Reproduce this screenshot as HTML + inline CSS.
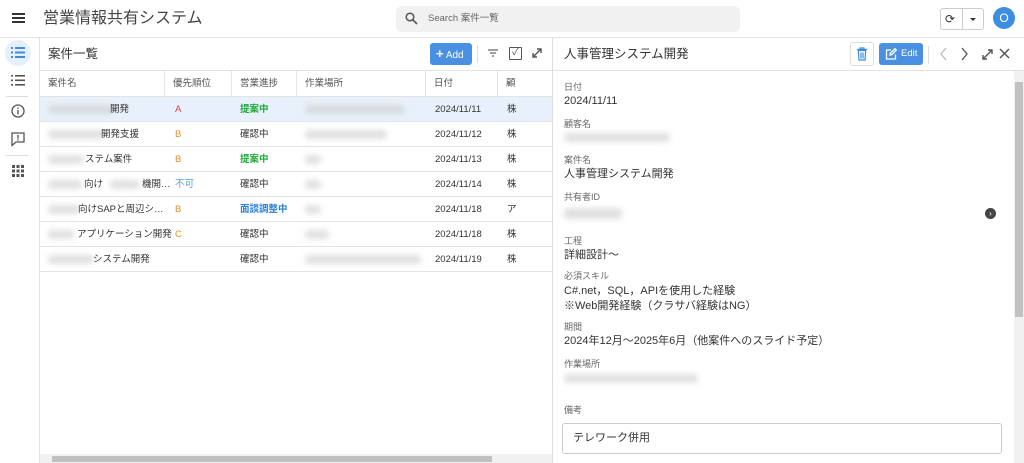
<!DOCTYPE html><html><head><meta charset="utf-8"><style>
*{box-sizing:border-box;margin:0;padding:0}
body{width:1024px;height:463px;overflow:hidden;font-family:"Liberation Sans","Noto Sans CJK JP",sans-serif;color:#333;background:#fff;position:relative;font-size:10px}
.abs{position:absolute;line-height:1.15}
.blur{position:absolute;background:#ccc;filter:blur(3px);border-radius:4px;opacity:.6}
.th{position:absolute;top:71px;height:26px;line-height:26px;font-size:9.5px;color:#555;border-right:1px solid #e4e4e4;padding-left:8px}
.row{position:absolute;left:40px;width:512px;height:25px;border-bottom:1px solid #e4e4e4;font-size:9.5px;line-height:25px}
.row span{position:absolute;white-space:nowrap}
.lbl{position:absolute;left:564px;font-size:9px;color:#666;line-height:1.15}
.val{position:absolute;left:564px;font-size:11px;color:#333;line-height:1.15}
</style></head><body>
<div class="abs" style="left:0;top:37px;width:1024px;height:1px;background:#e2e2e2"></div>
<div class="abs" style="left:12px;top:13px;width:13px;height:2px;background:#333;box-shadow:0 4px 0 #333,0 8px 0 #333"></div>
<div class="abs" style="left:43px;top:9px;font-size:16px;color:#444;line-height:20px">営業情報共有システム</div>
<div class="abs" style="left:396px;top:6px;width:344px;height:26px;background:#f1f1f1;border-radius:6px"></div>
<svg class="abs" style="left:405px;top:12px" width="13" height="13" viewBox="0 0 13 13"><circle cx="5" cy="5" r="3.8" fill="none" stroke="#555" stroke-width="1.5"/><path d="M8 8l4 4" stroke="#555" stroke-width="1.6"/></svg>
<div class="abs" style="left:428px;top:6px;font-size:9.5px;color:#666;line-height:26px">Search 案件一覧</div>
<div class="abs" style="left:940px;top:8px;width:44px;height:22px;border:1px solid #ccc;border-radius:3px"></div>
<div class="abs" style="left:962px;top:8px;width:1px;height:22px;background:#ccc"></div>
<div class="abs" style="left:945px;top:8px;font-size:12px;color:#333;line-height:22px">⟳</div>
<div class="abs" style="left:970px;top:18px;border:3px solid transparent;border-top:3px solid #333"></div>
<div class="abs" style="left:993px;top:7px;width:22px;height:22px;border-radius:50%;background:#3d8ee0;color:#fff;text-align:center;line-height:22px;font-size:12px">O</div>
<div class="abs" style="left:39px;top:38px;width:1px;height:425px;background:#e2e2e2"></div>
<div class="abs" style="left:5px;top:40px;width:26px;height:26px;border-radius:50%;background:#e6f0fb"></div>
<svg class="abs" style="left:11px;top:46px" width="14" height="13"><g fill="#3d8ee0"><rect x="0" y="1" width="2" height="2"/><rect x="0" y="5.5" width="2" height="2"/><rect x="0" y="10" width="2" height="2"/><rect x="4" y="1" width="10" height="2"/><rect x="4" y="5.5" width="10" height="2"/><rect x="4" y="10" width="10" height="2"/></g></svg>
<svg class="abs" style="left:11px;top:74px" width="14" height="13"><g fill="#555"><rect x="0" y="1" width="2" height="1.6"/><rect x="0" y="5.5" width="2" height="1.6"/><rect x="0" y="10" width="2" height="1.6"/><rect x="4" y="1" width="10" height="1.6"/><rect x="4" y="5.5" width="10" height="1.6"/><rect x="4" y="10" width="10" height="1.6"/></g></svg>
<div class="abs" style="left:6px;top:96px;width:22px;height:1px;background:#ddd"></div>
<svg class="abs" style="left:11px;top:104px" width="14" height="14"><circle cx="7" cy="7" r="6" fill="none" stroke="#555" stroke-width="1.3"/><rect x="6.3" y="6" width="1.4" height="4.5" fill="#555"/><rect x="6.3" y="3.5" width="1.4" height="1.4" fill="#555"/></svg>
<svg class="abs" style="left:11px;top:132px" width="14" height="15"><path d="M1 1h12v9H5l-4 3.5z" fill="none" stroke="#555" stroke-width="1.3"/><rect x="6.3" y="3" width="1.4" height="3.5" fill="#555"/><rect x="6.3" y="7.3" width="1.4" height="1.3" fill="#555"/></svg>
<div class="abs" style="left:6px;top:155px;width:22px;height:1px;background:#ddd"></div>
<svg class="abs" style="left:12px;top:165px" width="12" height="12"><g fill="#555"><rect x="0" y="0" width="3" height="3"/><rect x="4.5" y="0" width="3" height="3"/><rect x="9" y="0" width="3" height="3"/><rect x="0" y="4.5" width="3" height="3"/><rect x="4.5" y="4.5" width="3" height="3"/><rect x="9" y="4.5" width="3" height="3"/><rect x="0" y="9" width="3" height="3"/><rect x="4.5" y="9" width="3" height="3"/><rect x="9" y="9" width="3" height="3"/></g></svg>
<div class="abs" style="left:48px;top:44px;font-size:12.5px;color:#333;line-height:20px">案件一覧</div>
<div class="abs" style="left:430px;top:43px;width:42px;height:22px;background:#4a90e2;border-radius:3px;color:#fff;font-size:10px;line-height:22px;padding-left:6px"><b style="font-size:13px">+</b> Add</div>
<div class="abs" style="left:477px;top:45px;width:1px;height:18px;background:#ddd"></div>
<svg class="abs" style="left:487px;top:48px" width="12" height="10"><path d="M1 2h10M3 5h6M5 8h2" stroke="#666" stroke-width="1.2"/></svg>
<div class="abs" style="left:509px;top:47px;width:13px;height:13px;border:1.4px solid #555;border-radius:1px;font-size:10px;line-height:10px;text-align:center;color:#555">✓</div>
<svg class="abs" style="left:531px;top:47px" width="12" height="12"><path d="M2 10L10 2M6 2h4v4M2 6v4h4" fill="none" stroke="#555" stroke-width="1.4"/></svg>
<div class="abs" style="left:40px;top:70px;width:512px;height:1px;background:#e2e2e2"></div>
<div class="abs" style="left:552px;top:38px;width:1px;height:425px;background:#ddd"></div>
<div class="th" style="left:40px;width:125px">案件名</div>
<div class="th" style="left:165px;width:67px">優先順位</div>
<div class="th" style="left:232px;width:65px">営業進捗</div>
<div class="th" style="left:297px;width:129px">作業場所</div>
<div class="th" style="left:426px;width:72px">日付</div>
<div class="th" style="left:498px;width:54px;border:none">顧</div>
<div class="abs" style="left:40px;top:96px;width:512px;height:1px;background:#e2e2e2"></div>
<div class="row" style="top:97px;background:#e8f1fb"><div class="blur" style="left:8px;top:8px;width:68px;height:9px"></div><span style="left:70px">開発</span><span style="left:135px;color:#e04040">A</span><span style="left:200px;color:#1fa83a;font-weight:bold">提案中</span><div class="blur" style="left:265px;top:8px;width:100px;height:9px"></div><span style="left:395px">2024/11/11</span><span style="left:467px">株</span></div>
<div class="row" style="top:122px"><div class="blur" style="left:8px;top:8px;width:58px;height:9px"></div><span style="left:61px">開発支援</span><span style="left:135px;color:#e0902a">B</span><span style="left:200px">確認中</span><div class="blur" style="left:265px;top:8px;width:82px;height:9px"></div><span style="left:395px">2024/11/12</span><span style="left:467px">株</span></div>
<div class="row" style="top:147px"><div class="blur" style="left:8px;top:8px;width:36px;height:9px"></div><span style="left:45px">ステム案件</span><span style="left:135px;color:#e0902a">B</span><span style="left:200px;color:#1fa83a;font-weight:bold">提案中</span><div class="blur" style="left:265px;top:8px;width:16px;height:9px"></div><span style="left:395px">2024/11/13</span><span style="left:467px">株</span></div>
<div class="row" style="top:172px"><div class="blur" style="left:8px;top:8px;width:34px;height:9px"></div><span style="left:44px">向け</span><div class="blur" style="left:70px;top:8px;width:30px;height:9px"></div><span style="left:102px">機開…</span><span style="left:135px;color:#5b9fe0">不可</span><span style="left:200px">確認中</span><div class="blur" style="left:265px;top:8px;width:16px;height:9px"></div><span style="left:395px">2024/11/14</span><span style="left:467px">株</span></div>
<div class="row" style="top:197px"><div class="blur" style="left:8px;top:8px;width:32px;height:9px"></div><span style="left:38px;width:86px;overflow:hidden;text-overflow:ellipsis">向けSAPと周辺システム構築</span><span style="left:135px;color:#e0902a">B</span><span style="left:200px;color:#2a7fd8;font-weight:bold">面談調整中</span><div class="blur" style="left:265px;top:8px;width:16px;height:9px"></div><span style="left:395px">2024/11/18</span><span style="left:467px">ア</span></div>
<div class="row" style="top:222px"><div class="blur" style="left:8px;top:8px;width:26px;height:9px"></div><span style="left:37px">アプリケーション開発</span><span style="left:135px;color:#e0902a">C</span><span style="left:200px">確認中</span><div class="blur" style="left:265px;top:8px;width:24px;height:9px"></div><span style="left:395px">2024/11/18</span><span style="left:467px">株</span></div>
<div class="row" style="top:247px"><div class="blur" style="left:8px;top:8px;width:46px;height:9px"></div><span style="left:53px">システム開発</span><span style="left:200px">確認中</span><div class="blur" style="left:265px;top:8px;width:116px;height:9px"></div><span style="left:395px">2024/11/19</span><span style="left:467px">株</span></div>
<div class="abs" style="left:40px;top:454px;width:512px;height:9px;background:#f1f1f1"></div>
<div class="abs" style="left:52px;top:456px;width:440px;height:6px;background:#c1c1c1"></div>
<div class="abs" style="left:564px;top:44px;font-size:12.5px;color:#333;line-height:20px">人事管理システム開発</div>
<div class="abs" style="left:850px;top:42px;width:24px;height:24px;border:1px solid #ddd;border-radius:3px"></div>
<svg class="abs" style="left:856px;top:47px" width="12" height="14"><path d="M1 2.5h10M4 2.5V1h4v1.5M2.3 3.5l.7 9.5h6l.7-9.5z M5 5.5v6M7 5.5v6" fill="none" stroke="#3d8ee0" stroke-width="1.2"/></svg>
<div class="abs" style="left:879px;top:43px;width:44px;height:22px;background:#4a90e2;border-radius:3px;color:#fff;font-size:9.5px;line-height:22px;padding-left:22px">Edit</div>
<svg class="abs" style="left:885px;top:48px" width="12" height="12"><path d="M6 2H1.5v9h9V6.5M5 7l.3-1.8L10 .8l1.3 1.3L6.8 6.7z" fill="none" stroke="#fff" stroke-width="1.3"/></svg>
<div class="abs" style="left:928px;top:46px;width:1px;height:18px;background:#ddd"></div>
<svg class="abs" style="left:940px;top:47px" width="70" height="14"><path d="M6 1L1 7l5 6" fill="none" stroke="#bbb" stroke-width="1.3"/><path d="M22 1l5 6-5 6" fill="none" stroke="#555" stroke-width="1.3"/><path d="M43 12L52 3M48 3h4v4M43 8v4h4" fill="none" stroke="#555" stroke-width="1.4"/><path d="M60 2l9 9M69 2l-9 9" stroke="#555" stroke-width="1.5"/></svg>
<div class="abs" style="left:553px;top:70px;width:471px;height:1px;background:#e2e2e2"></div>
<div class="abs" style="left:1014px;top:71px;width:10px;height:392px;background:#f1f1f1"></div>
<div class="abs" style="left:1015px;top:82px;width:8px;height:235px;background:#c1c1c1"></div>
<div class="lbl" style="top:82px">日付</div><div class="val" style="top:95px">2024/11/11</div>
<div class="lbl" style="top:119px">顧客名</div><div class="blur" style="left:564px;top:133px;width:106px;height:9px"></div>
<div class="lbl" style="top:155px">案件名</div><div class="val" style="top:168px">人事管理システム開発</div>
<div class="lbl" style="top:192px">共有者ID</div><div class="blur" style="left:564px;top:208px;width:58px;height:11px"></div>
<div class="abs" style="left:985px;top:208px;width:11px;height:11px;border-radius:50%;background:#444;color:#fff;font-size:8px;line-height:11px;text-align:center">›</div>
<div class="lbl" style="top:236px">工程</div><div class="val" style="top:249px">詳細設計～</div>
<div class="lbl" style="top:271px">必須スキル</div><div class="val" style="top:284px;line-height:15px">C#.net，SQL，APIを使用した経験<br>※Web開発経験（クラサバ経験はNG）</div>
<div class="lbl" style="top:322px">期間</div><div class="val" style="top:335px">2024年12月～2025年6月（他案件へのスライド予定）</div>
<div class="lbl" style="top:359px">作業場所</div><div class="blur" style="left:564px;top:374px;width:134px;height:9px"></div>
<div class="lbl" style="top:405px">備考</div>
<div class="abs" style="left:562px;top:423px;width:440px;height:31px;border:1px solid #ccc;border-radius:3px;font-size:11px;line-height:29px;padding-left:10px">テレワーク併用</div>
</body></html>
